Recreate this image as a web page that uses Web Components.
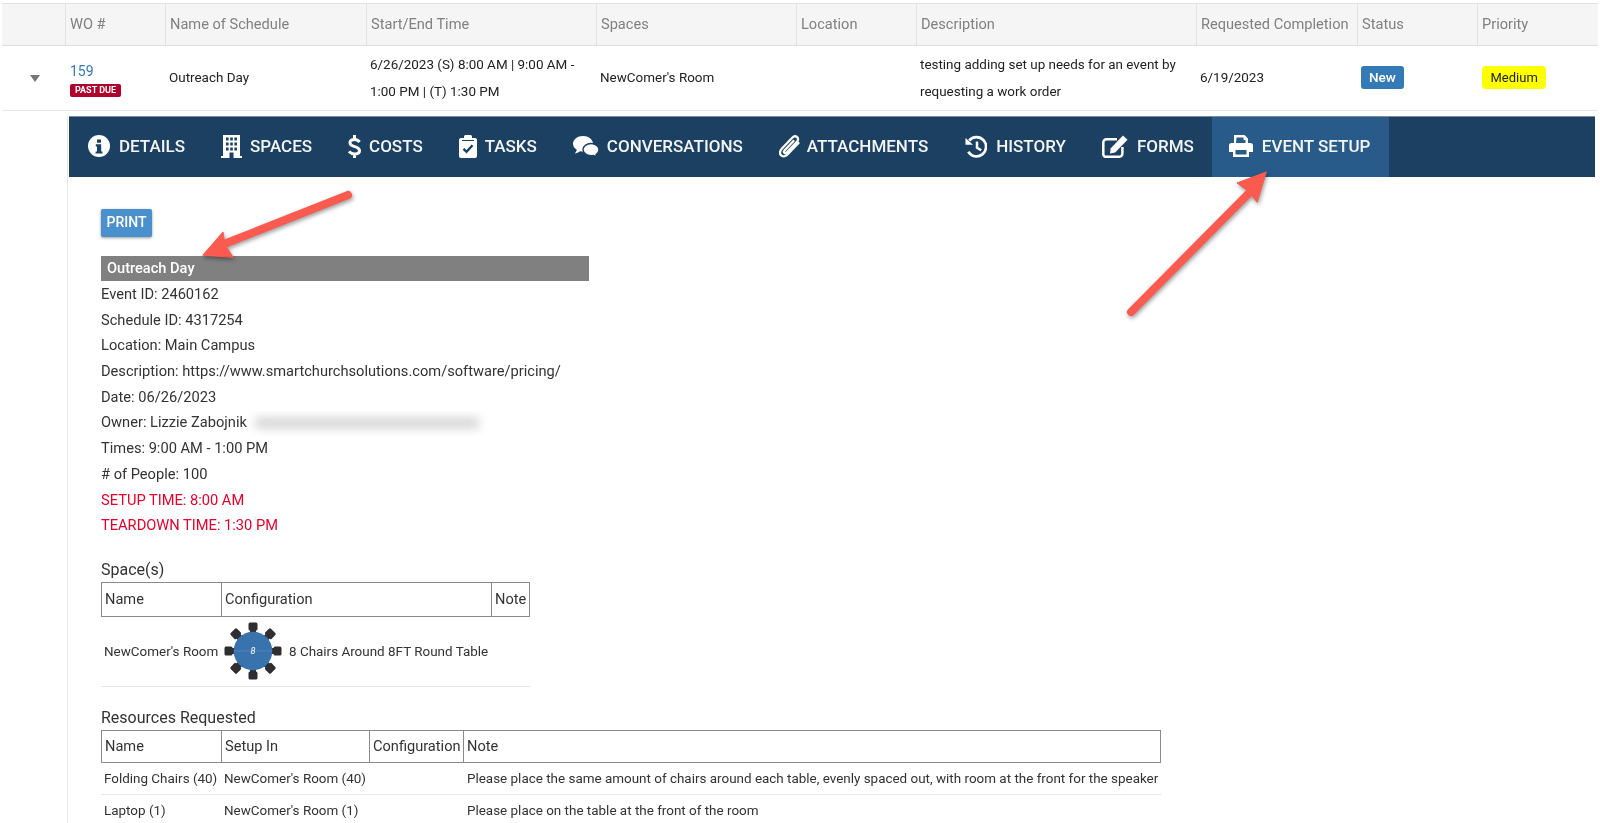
<!DOCTYPE html>
<html lang="en"><head><meta charset="utf-8"><title>Work order</title>
<style>
html,body{margin:0;padding:0;background:#fff;height:823px;overflow:hidden}
body{font-family:Roboto,"Liberation Sans",sans-serif;color:#333}
</style></head><body>
<wo-page>
  <wo-grid-row kind="head">
    <wo-cell></wo-cell><wo-cell>WO #</wo-cell><wo-cell>Name of Schedule</wo-cell><wo-cell>Start/End Time</wo-cell><wo-cell>Spaces</wo-cell><wo-cell>Location</wo-cell><wo-cell>Description</wo-cell><wo-cell>Requested Completion</wo-cell><wo-cell>Status</wo-cell><wo-cell>Priority</wo-cell>
  </wo-grid-row>
  <wo-grid-row kind="body">
    <wo-cell><wo-caret></wo-caret></wo-cell>
    <wo-cell><wo-number num="159" flag="PAST DUE"></wo-number></wo-cell>
    <wo-cell>Outreach Day</wo-cell>
    <wo-cell>6/26/2023 (S) 8:00 AM | 9:00 AM - 1:00 PM | (T) 1:30 PM</wo-cell>
    <wo-cell>NewComer's Room</wo-cell>
    <wo-cell></wo-cell>
    <wo-cell>testing adding set up needs for an event by requesting a work order</wo-cell>
    <wo-cell>6/19/2023</wo-cell>
    <wo-cell><wo-pill tone="new">New</wo-pill></wo-cell>
    <wo-cell><wo-pill tone="medium">Medium</wo-pill></wo-cell>
  </wo-grid-row>
  <wo-panel>
    <wo-tabs>
      <wo-tab icon="info">Details</wo-tab>
      <wo-tab icon="building">Spaces</wo-tab>
      <wo-tab icon="dollar">Costs</wo-tab>
      <wo-tab icon="tasks">Tasks</wo-tab>
      <wo-tab icon="comments">Conversations</wo-tab>
      <wo-tab icon="clip">Attachments</wo-tab>
      <wo-tab icon="history">History</wo-tab>
      <wo-tab icon="edit">Forms</wo-tab>
      <wo-tab icon="print" active>Event Setup</wo-tab>
    </wo-tabs>
    <event-setup>
      <print-button>Print</print-button>
      <event-title>Outreach Day</event-title>
      <info-line>Event ID: 2460162</info-line>
      <info-line>Schedule ID: 4317254</info-line>
      <info-line>Location: Main Campus</info-line>
      <info-line>Description: https://www.smartchurchsolutions.com/software/pricing/</info-line>
      <info-line>Date: 06/26/2023</info-line>
      <info-line>Owner: Lizzie Zabojnik <blur-mask></blur-mask></info-line>
      <info-line>Times: 9:00 AM - 1:00 PM</info-line>
      <info-line># of People: 100</info-line>
      <info-line alert>SETUP TIME: 8:00 AM</info-line>
      <info-line alert>TEARDOWN TIME: 1:30 PM</info-line>
      <section-title>Space(s)</section-title>
      <data-table cols="120px 270px 39px" style="width:429px">
        <dt-cell head>Name</dt-cell><dt-cell head>Configuration</dt-cell><dt-cell head>Note</dt-cell>
        <dt-cell tall>NewComer's Room</dt-cell><dt-cell tall wide><table-seat></table-seat><span>8 Chairs Around 8FT Round Table</span></dt-cell>
      </data-table>
      <section-title>Resources Requested</section-title>
      <data-table cols="120px 148px 94px 698px" style="width:1060px">
        <dt-cell head short>Name</dt-cell><dt-cell head short>Setup In</dt-cell><dt-cell head short>Configuration</dt-cell><dt-cell head short>Note</dt-cell>
        <dt-cell>Folding Chairs (40)</dt-cell><dt-cell>NewComer's Room (40)</dt-cell><dt-cell></dt-cell><dt-cell note>Please place the same amount of chairs around each table, evenly spaced out, with room at the front for the speaker</dt-cell>
        <dt-cell>Laptop (1)</dt-cell><dt-cell>NewComer's Room (1)</dt-cell><dt-cell></dt-cell><dt-cell note>Please place on the table at the front of the room</dt-cell>
      </data-table>
    </event-setup>
  </wo-panel>
  <callout-arrows></callout-arrows>
</wo-page>
<script>
const NAVY='#1b4061', ACTIVE='#285a8a';
const ICONS={
info:[22,22,1,9,`<circle cx="11" cy="11" r="11" fill="#fff"/><path fill="${NAVY}" d="M9 4.500h4v3.200H9zM7.800 9.300h5.400v7.200h1.300v2.100H7.600v-2.100h1.400v-5.100H7.800z"/>`],
building:[21,23,0,8,`<path fill="#fff" d="M2 0h17v21h2v2H0v-2h2z"/><path fill="${NAVY}" d="M5 2.500h2.600v3H5zM9.200 2.500h2.600v3H9.200zM13.400 2.500h2.600v3h-2.600zM5 7.500h2.600v3H5zM9.200 7.500h2.600v3H9.200zM13.400 7.500h2.600v3h-2.600zM5 12.500h2.600v3H5zM9.200 12.500h2.600v3H9.200zM13.400 12.500h2.600v3h-2.600zM8.500 17.500h4V23h-4z"/>`],
dollar:[13,23,0,8,`<path fill="none" stroke="#fff" stroke-width="3" d="M11.600 7C10.200 5.200 8.600 4.400 6.500 4.400 3.800 4.400 2 5.700 2 7.700c0 5 9.500 2.900 9.500 8 0 2-1.900 3.300-5 3.300-2.100 0-4-.9-5.500-2.600M6.500 0v4.500M6.500 18.500V23"/>`],
tasks:[18,23,0,8,`<rect y="3" width="18" height="20" rx="2" fill="#fff"/><rect x="5" width="8" height="6" rx="1.500" fill="#fff"/><path fill="none" stroke="${NAVY}" stroke-width="1" d="M3 5.500h12"/><path fill="none" stroke="${NAVY}" stroke-width="2.400" d="M4.500 13.800l3 3 6-6.600"/>`],
comments:[26,21,0,8,`<path fill="#fff" d="M10 0c5.500 0 10 3.400 10 7.800s-4.500 7.800-10 7.800c-1 0-2-.1-2.900-.3C5.600 16.500 3.500 17.300 1.800 17.500c1-1.100 1.700-2.300 2-3.700C1.500 12.400 0 10.300 0 7.800 0 3.400 4.500 0 10 0z"/><path fill="#fff" stroke="${NAVY}" stroke-width="1.400" d="M18 7.500c4.400 0 8 2.800 8 6.200 0 2-1.200 3.700-3 4.800.2 1 .8 1.800 1.500 2.500-1.500-.1-3-.7-4.200-1.600-.7.1-1.500.2-2.300.2-4.400 0-8-2.800-8-6s3.600-6.100 8-6.100z"/>`],
clip:[21,23,0,7,`<path fill="none" stroke="#fff" stroke-width="2.300" stroke-linecap="round" d="M19.500 8 8.500 19.500c-2.200 2.200-5 2.300-6.500.8C.5 18.800.8 15.800 2.700 13.800L13 3c1.600-1.700 3.800-2 5.200-.8 1.300 1.200 1.100 3.200-.4 4.800L7.800 17.300c-.9.900-1.900 1-2.500.4-.6-.6-.4-1.600.4-2.500L14.500 6"/>`],
history:[22,23,1,9,`<path fill="none" stroke="#fff" stroke-width="2.700" d="M4.200 5.500A9.600 9.600 0 1 1 3.300 16.800"/><path fill="#fff" d="M.5 3l7.500 6.700H.5z"/><path fill="none" stroke="#fff" stroke-width="2.500" d="M12 6.500v6.200l4.200 2.600"/>`],
edit:[26,23,0,9,`<path fill="none" stroke="#fff" stroke-width="2.500" d="M15 4.200H4.500a3.200 3.200 0 0 0-3.200 3.200v11.900a2.500 2.500 0 0 0 2.500 2.500h13.400a3.200 3.200 0 0 0 3.200-3.200V12"/><path fill="#fff" d="M21 .5l4.500 4.200L13.200 17.500l-5.200 1 .8-5.300z"/>`],
print:[24,22,-1,9,`<path fill="#fff" d="M5 0h10.500L19 3.500V8H5zM2.500 8h19A2.500 2.500 0 0 1 24 10.500V17h-4v5H4v-5H0v-6.500A2.500 2.500 0 0 1 2.500 8z"/><path fill="${ACTIVE}" d="M7.500 2.500h7V5h2v3h-9.500zM6.500 15h11v4.500h-11z"/><path fill="#fff" d="M5 8h14v2H5z"/>`]
};
function def(name,css,html){
  customElements.define(name,class extends HTMLElement{
    constructor(){super();const r=this.attachShadow({mode:'open'});r.innerHTML=`<style>${css}</style>${typeof html==='function'?html(this):html}`;}
  });
}
def('wo-page',':host{display:block;position:relative;height:823px;overflow:hidden;padding-top:3px;box-sizing:border-box;filter:blur(.35px)}','<slot></slot>');
const COLS='63px 100px 201px 230px 200px 120px 280px 161px 120px 121px';
customElements.define('wo-grid-row',class extends HTMLElement{
  constructor(){super();this.attachShadow({mode:'open'}).innerHTML=`<style>
  :host{display:grid;grid-template-columns:${COLS};margin:0 2px}
  :host([kind=head]){height:43px;background:#f5f5f5;border-top:1px solid #e2e2e2;border-bottom:1px solid #dfdfdf;box-sizing:border-box;color:#808080;font-size:14.600px}
  :host([kind=body]){height:65px;background:#fff;border-bottom:1px solid #e6e6e6;box-sizing:border-box;color:#222;font-size:13.450px;line-height:27.500px}
  </style><slot></slot>`;}
  connectedCallback(){
    const head=this.getAttribute('kind')==='head';
    [...this.children].forEach((c,i)=>{c.toggleAttribute('sep',head&&i>0);c.toggleAttribute('up',head);});
  }
});
def('wo-cell',':host{display:flex;align-items:center;padding:0 4px;min-width:0;box-sizing:border-box}:host([sep]){border-left:1px solid #e2e2e2}:host([up]){padding-bottom:2px}','<div><slot></slot></div>');
def('wo-caret',':host{display:block;margin:0 0 0 24px;width:0;height:0;border-left:5px solid transparent;border-right:5px solid transparent;border-top:7px solid #777}','');
def('wo-number',`:host{display:block;line-height:normal;padding:5px 0 0 1px}
a{color:#337ab7;font-size:14px;text-decoration:none;display:block;margin:-1px 0 2px}
span{display:inline-block;background:#b0002c;color:#fff;font-size:9px;font-weight:700;line-height:13px;padding:0 5px;border-radius:2px}`,
  h=>`<a href="#">${h.getAttribute('num')}</a><span>${h.getAttribute('flag')}</span>`);
def('wo-pill',`:host{display:inline-block;line-height:23px;border-radius:3px}
:host([tone=new]){background:#337ab7;color:#fff;font-weight:500;font-size:13.500px;padding:0 8px}
:host([tone=medium]){background:#ff0;color:#222;border-radius:4px;font-size:13px;padding:0 8.500px;margin-left:1px}`,'<slot></slot>');
def('wo-panel',`:host{display:block;margin:5px 5px 0 67px;border-left:1px solid #e8e8e8;background:#fff}`,'<slot></slot>');
def('wo-tabs',`:host{display:flex;height:61px;background:${NAVY};border-top:1px solid #7d8a96;box-sizing:border-box;margin-left:1px;padding-bottom:0}`,'<slot></slot>');
customElements.define('wo-tab',class extends HTMLElement{
  constructor(){super();const k=ICONS[this.getAttribute('icon')];
    this.attachShadow({mode:'open'}).innerHTML=`<style>
    :host{display:flex;align-items:center;padding:0 18px 2px;color:#f2f4f6;font-size:17px;font-weight:500;text-transform:uppercase;white-space:nowrap}
    :host([active]){background:${ACTIVE};padding-right:19px}
    svg{flex:none;margin:0 ${k[3]}px 0 ${k[2]}px}</style>
    <svg width="${k[0]}" height="${k[1]}" viewBox="0 0 ${k[0]} ${k[1]}" aria-hidden="true">${k[4]}</svg><span><slot></slot></span>`;}
});
def('event-setup',':host{display:block;padding:32px 0 0 33px;font-size:14.650px;color:#333}','<slot></slot>');
def('print-button',`:host{display:block;width:51px;height:28px;line-height:27px;text-align:center;background:#4a90cc;color:#fff;font-size:14px;font-weight:500;text-transform:uppercase;border-radius:2px;box-shadow:0 1px 3px rgba(0,0,0,.4);margin-bottom:19px}`,'<slot></slot>');
def('event-title',`:host{display:block;width:488px;height:25px;line-height:25px;background:#808080;color:#fff;font-weight:500;font-size:14.600px;padding-left:6px;box-sizing:border-box;margin-bottom:1px}`,'<slot></slot>');
def('info-line',`:host{display:block;height:25.700px;line-height:25.700px;white-space:nowrap}:host([alert]){color:#e8002a}`,'<slot></slot>');
def('blur-mask',`:host{display:inline-block;position:relative;width:240px;height:25px;vertical-align:middle;overflow:hidden;margin-left:-4px}
div{position:absolute;left:8px;right:8px;top:6px;height:12px;background:#d9d9d9;filter:blur(5px)}`,'<div></div>');
def('section-title',`:host{display:block;font-size:16px;height:25px;line-height:26px;margin-top:18px;color:#333}`,'<slot></slot>');
customElements.define('data-table',class extends HTMLElement{
  constructor(){super();this.attachShadow({mode:'open'}).innerHTML=`<style>:host{display:block}.g{display:grid;grid-template-columns:${this.getAttribute('cols')}}</style><div class="g"><slot></slot></div>`;}
  connectedCallback(){
    const n=this.getAttribute('cols').split(' ').length;
    [...this.children].forEach((c,i)=>{ if(c.hasAttribute('head')){c.toggleAttribute('last',i===n-1);} });
  }
});
def('dt-cell',`:host{display:flex;align-items:center;min-height:32px;box-sizing:border-box;padding:0 3px;font-size:13.450px;border-bottom:1px solid #e6e6e6;white-space:nowrap;color:#333}
:host([note]){padding-left:4px}
:host([head]){height:35px;font-size:14.600px;border:1px solid #8a8a8a;border-right:0}
:host([head][short]){height:33px}
:host([head][last]){border-right:1px solid #8a8a8a}
:host([tall]){height:70px}
:host([wide]){grid-column:2 / 4;padding-left:2px}`,'<slot></slot>');
const chairs=[...Array(8).keys()].map(i=>`<g transform="rotate(${i*45} 30 30)"><rect x="25.500" y="1.500" width="9" height="8" rx="1.500" fill="#2f2f33"/><rect x="27" y="8" width="6" height="3.500" fill="#2f2f33"/></g>`).join('');
def('table-seat',':host{display:block;flex:none;width:60px;height:60px;margin-right:6px}',`<svg width="60" height="60" viewBox="0 0 60 60" aria-hidden="true">${chairs}<circle cx="30" cy="30" r="19.300" fill="#3873ad"/><path d="M11 30h38" stroke="#5c8dbd" stroke-width=".6"/><text x="30" y="33" font-size="9" font-style="italic" fill="#fff" text-anchor="middle" font-family="Roboto">8</text></svg>`);
def('callout-arrows',':host{position:absolute;inset:0;pointer-events:none;display:block}svg{position:absolute;left:0;top:0;filter:drop-shadow(1px 2px 2px rgba(0,0,0,.4))}',
`<svg width="1600" height="823" viewBox="0 0 1600 823" aria-hidden="true">
<g fill="#fb5a4f" stroke="#fb5a4f" stroke-linecap="round" stroke-linejoin="round">
<path fill="none" stroke-width="8" d="M348 195 224 244"/><path stroke-width="1" d="M203 255 223 232 225 245 233 257z"/>
<path fill="none" stroke-width="8" d="M1131 312 1250 192"/><path stroke-width="1" d="M1266 172 1237 183 1248 191 1257 202z"/>
</g></svg>`);
</script>
</body></html>
